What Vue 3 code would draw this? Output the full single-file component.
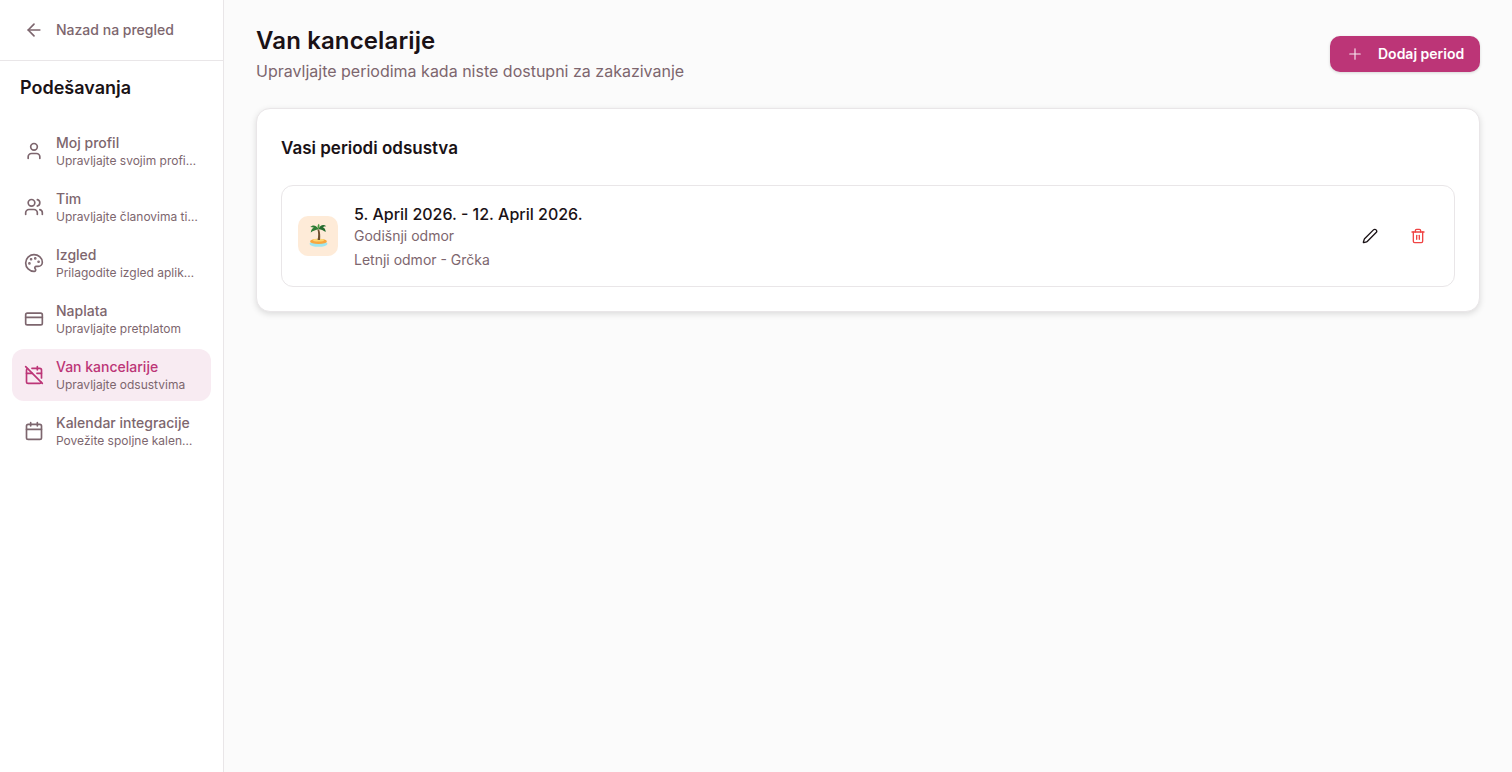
<script setup>
const items = [
  { id: 'user', title: 'Moj profil', sub: 'Upravljajte svojim profi…' },
  { id: 'users', title: 'Tim', sub: 'Upravljajte članovima ti…' },
  { id: 'palette', title: 'Izgled', sub: 'Prilagodite izgled aplik…' },
  { id: 'card', title: 'Naplata', sub: 'Upravljajte pretplatom' },
  { id: 'off', title: 'Van kancelarije', sub: 'Upravljajte odsustvima', active: true },
  { id: 'cal', title: 'Kalendar integracije', sub: 'Povežite spoljne kalen…' },
]
</script>

<template>
  <div class="page">
    <aside class="side">
      <div class="back">
        <svg class="ic" viewBox="0 0 24 24"><path d="m12 19-7-7 7-7" /><path d="M19 12H5" /></svg>
        <span>Nazad na pregled</span>
      </div>
      <h2 class="side-title">Podešavanja</h2>
      <nav class="nav">
        <div v-for="it in items" :key="it.id" class="item" :class="{ active: it.active }">
          <svg class="ic" viewBox="0 0 24 24">
            <template v-if="it.id === 'user'">
              <path d="M19 21v-2a4 4 0 0 0-4-4H9a4 4 0 0 0-4 4v2" /><circle cx="12" cy="7" r="4" />
            </template>
            <template v-else-if="it.id === 'users'">
              <path d="M16 21v-2a4 4 0 0 0-4-4H6a4 4 0 0 0-4 4v2" /><circle cx="9" cy="7" r="4" />
              <path d="M22 21v-2a4 4 0 0 0-3-3.87" /><path d="M16 3.13a4 4 0 0 1 0 7.75" />
            </template>
            <template v-else-if="it.id === 'palette'">
              <path d="M12 22a1 1 0 0 1 0-20 10 9 0 0 1 10 9 5 5 0 0 1-5 5h-2.25a1.75 1.75 0 0 0-1.4 2.8l.3.4a1.75 1.75 0 0 1-1.4 2.8z" />
              <circle cx="13.5" cy="6.5" r=".6" class="dot" /><circle cx="17.5" cy="10.5" r=".6" class="dot" />
              <circle cx="6.5" cy="12.5" r=".6" class="dot" /><circle cx="8.5" cy="7.5" r=".6" class="dot" />
            </template>
            <template v-else-if="it.id === 'card'">
              <rect x="2" y="5" width="20" height="14" rx="2" /><path d="M2 10h20" />
            </template>
            <template v-else-if="it.id === 'off'">
              <path d="M4.2 4.2A2 2 0 0 0 3 6v14a2 2 0 0 0 2 2h14a2 2 0 0 0 1.82-1.18" />
              <path d="M21 15.5V6a2 2 0 0 0-2-2H9.5" /><path d="M16 2v4" /><path d="M3 10h7" /><path d="M21 10h-5.5" />
              <path d="m2 2 20 20" />
            </template>
            <template v-else>
              <path d="M8 2v4" /><path d="M16 2v4" /><rect x="3" y="4" width="18" height="18" rx="2" /><path d="M3 10h18" />
            </template>
          </svg>
          <div class="item-text">
            <div class="item-title">{{ it.title }}</div>
            <div class="item-sub">{{ it.sub }}</div>
          </div>
        </div>
      </nav>
    </aside>

    <main class="main">
      <header class="head">
        <div>
          <h1 class="title">Van kancelarije</h1>
          <p class="subtitle">Upravljajte periodima kada niste dostupni za zakazivanje</p>
        </div>
        <button class="add">
          <svg class="plus" viewBox="0 0 24 24"><path d="M5 12h14" /><path d="M12 5v14" /></svg>
          <span>Dodaj period</span>
        </button>
      </header>

      <section class="card">
        <h3 class="card-title">Vasi periodi odsustva</h3>
        <div class="row">
          <div class="emoji">
            <svg class="palm" viewBox="0 0 24 24" width="24" height="24">
              <ellipse cx="12.5" cy="20.8" rx="9" ry="3" fill="#9fe6f0" />
              <ellipse cx="12.5" cy="18.4" rx="8.4" ry="2.7" fill="#f8a63e" />
              <ellipse cx="12.5" cy="17.2" rx="5.5" ry="1.4" fill="#fcd672" />
              <path d="M11.4 6.5c1 3 1 6.500 .2 10.500h2.400c.5-4 .3-7.500-.9-10.500z" fill="#6f4f2e" />
              <path d="M12.500 6.200C10.500 1.800 6.500 1.500 4.300 4c1.500 0 2.700.2 3.600.7C6.300 5.100 5 6.700 4.800 9.500 7 7.700 10 6.700 12.500 6.200z" fill="#2f7d36" />
              <path d="M12.500 6.200c1.500-4.300 5.200-5.200 7.700-3-1.500.1-2.700.5-3.500 1.100 1.700.5 2.900 2.100 3 4.800-2.200-1.800-4.700-2.700-7.200-2.900z" fill="#256b2e" />
              <path d="M12.500 6.200C11 4.300 11.300 2 13 .8c.8 1.900.6 4-.5 5.400z" fill="#47983f" />
            </svg>
          </div>
          <div class="info">
            <div class="dates">5. April 2026. - 12. April 2026.</div>
            <div class="meta">Godišnji odmor</div>
            <div class="meta note">Letnji odmor - Grčka</div>
          </div>
          <div class="actions">
            <button class="act">
              <svg class="ic-s" viewBox="0 0 24 24"><path d="M21.174 6.812a1 1 0 0 0-3.986-3.987L3.842 16.174a2 2 0 0 0-.5.83l-1.321 4.352a.5.5 0 0 0 .623.622l4.353-1.32a2 2 0 0 0 .83-.497z" /></svg>
            </button>
            <button class="act del">
              <svg class="ic-s" viewBox="0 0 24 24"><path d="M3 6h18" /><path d="M19 6v14a2 2 0 0 1-2 2H7a2 2 0 0 1-2-2V6" /><path d="M8 6V4a2 2 0 0 1 2-2h4a2 2 0 0 1 2 2v2" /><path d="M10 11v6" /><path d="M14 11v6" /></svg>
            </button>
          </div>
        </div>
      </section>
    </main>
  </div>
</template>

<style>
html, body { margin: 0; background: #fbfbfb; }
</style>

<style scoped>
* { box-sizing: border-box; }
.page { display: flex; height: 772px; overflow: hidden; font-family: Inter, "Liberation Sans", sans-serif; background: #fbfbfb; }
.side { width: 224px; flex: none; background: #fff; border-right: 1px solid #e9e6e8; }
.back { height: 61px; padding: 0 12px 1px 24px; display: flex; align-items: center; gap: 12px; border-bottom: 1px solid #e9e6e8; color: #7d666e; font-size: 14px; font-weight: 500; line-height: 20px; }
.ic { width: 20px; height: 20px; flex: none; fill: none; stroke: currentColor; stroke-width: 2; stroke-linecap: round; stroke-linejoin: round; }
.dot { fill: currentColor; }
.side-title { margin: 0; padding: 15px 20px 0; font-size: 18px; line-height: 24px; font-weight: 600; color: #1a1216; }
.nav { padding: 25px 12px 0; display: flex; flex-direction: column; gap: 4px; }
.item { height: 52px; display: flex; align-items: center; gap: 12px; padding: 0 12px; border-radius: 12px; color: #7d666e; }
.item.active { background: #f8ebf2; color: #bc3577; }
.item-text { min-width: 0; flex: 1; }
.item-title { font-size: 14px; line-height: 20px; font-weight: 500; }
.item-sub { font-size: 12px; line-height: 16px; color: #7d666e; white-space: nowrap; }
.main { flex: 1; min-width: 0; padding: 24px 32px; }
.head { display: flex; justify-content: space-between; align-items: flex-start; height: 60px; margin-bottom: 24px; }
.title { margin: 0; padding-top: 1px; font-size: 24px; line-height: 32px; font-weight: 600; letter-spacing: .13px; color: #1a1216; }
.subtitle { margin: 0; padding-top: 2px; font-size: 16px; line-height: 24px; color: #7d666e; }
.add { margin-top: 12px; height: 36px; width: 150px; display: flex; align-items: center; gap: 14px; padding: 0 16px; border: 0; border-radius: 10px; background: #bc3577; color: #fff; font: 600 14px/20px Inter, sans-serif; white-space: nowrap; box-shadow: 0 1px 3px rgba(0,0,0,.15); }
.plus { width: 18px; height: 18px; fill: none; stroke: currentColor; stroke-width: 1.5; stroke-linecap: round; flex: none; opacity: .9; }
.card { height: 204px; padding: 24px; background: #fff; border: 1px solid #e9e6e8; border-radius: 14px; box-shadow: 0 2px 6px rgba(0,0,0,.13); }
.card-title { margin: 0 0 24px; padding-top: 1px; height: 28px; font-size: 17px; line-height: 28px; font-weight: 600; color: #1a1216; }
.row { height: 102px; display: flex; align-items: center; gap: 16px; padding: 0 16px; border: 1px solid #e9e6e8; border-radius: 12px; }
.emoji { width: 40px; height: 40px; border-radius: 10px; background: #feebd8; display: flex; align-items: center; justify-content: center; flex: none; }
.palm { margin-top: -2px; }
.info { flex: 1; min-width: 0; }
.dates { font-size: 16px; line-height: 24px; font-weight: 500; color: #1a1216; }
.meta { font-size: 14px; line-height: 20px; color: #7d666e; }
.note { margin-top: 4px; }
.actions { display: flex; gap: 8px; }
.act { width: 40px; height: 40px; display: flex; align-items: center; justify-content: center; border: 0; background: transparent; color: #1a1216; padding: 0; }
.act.del { color: #ef4444; }
.ic-s { width: 16px; height: 16px; fill: none; stroke: currentColor; stroke-width: 2; stroke-linecap: round; stroke-linejoin: round; }
</style>
